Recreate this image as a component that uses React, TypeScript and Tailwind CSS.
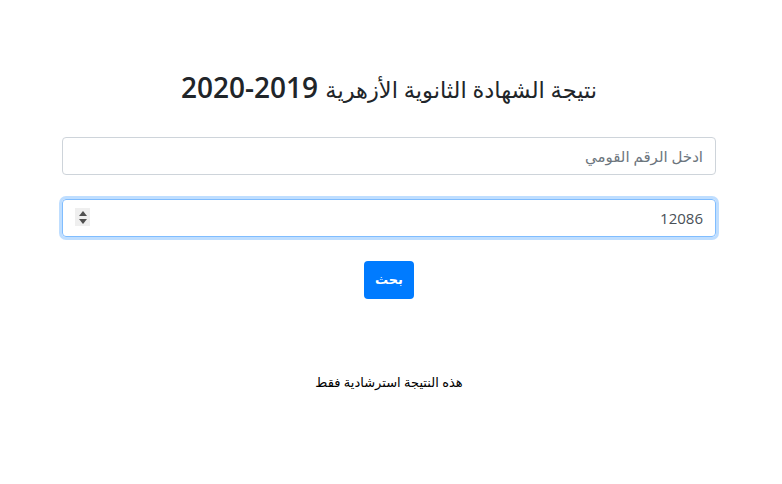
export default function App() {
  return (
    <div dir="rtl" className="min-h-[484px] bg-white font-['Open_Sans','DejaVu_Sans',sans-serif] text-[#212529]">
      <div className="mr-[66px] w-[654px] pt-[70px]">
        <h3 className="text-center text-[28px] leading-[34px] font-medium">
          <span className="text-[22.5px]">نتيجة الشهادة الثانوية الأزهرية</span>{" "}
          <span className="font-semibold">2019-2020</span>
        </h3>

        <div className="mt-[30px] flex flex-col gap-[24px]">
          <input
            type="text"
            placeholder="ادخل الرقم القومي"
            className="h-[38px] w-full rounded-[4px] border border-[#ced4da] px-3 text-[15px] text-[#495057] placeholder:text-[#6c757d] outline-none"
          />
          <div className="relative">
            <input
              type="text"
              defaultValue="12086"
              className="h-[38px] w-full rounded-[4px] border border-[#80bdff] px-3 text-[15px] text-[#495057] outline-none shadow-[0_0_0_3px_rgba(0,123,255,0.25)]"
            />
            <span className="absolute left-[13px] top-[9px] flex h-[18px] w-[15px] flex-col items-center justify-center gap-[3px] bg-[#efefef]">
              <svg width="8" height="5" viewBox="0 0 8 5"><path d="M0 5 L4 0 L8 5 Z" fill="#505050" /></svg>
              <svg width="8" height="5" viewBox="0 0 8 5"><path d="M0 0 L4 5 L8 0 Z" fill="#505050" /></svg>
            </span>
          </div>
        </div>

        <div className="mt-[24px] flex justify-center">
          <button className="h-[38px] w-[50px] rounded-[4px] bg-[#007bff] text-[13px] font-bold text-white">بحث</button>
        </div>

        <p className="mt-[74px] text-center text-[13px] text-black">هذه النتيجة استرشادية فقط</p>
      </div>
    </div>
  );
}
